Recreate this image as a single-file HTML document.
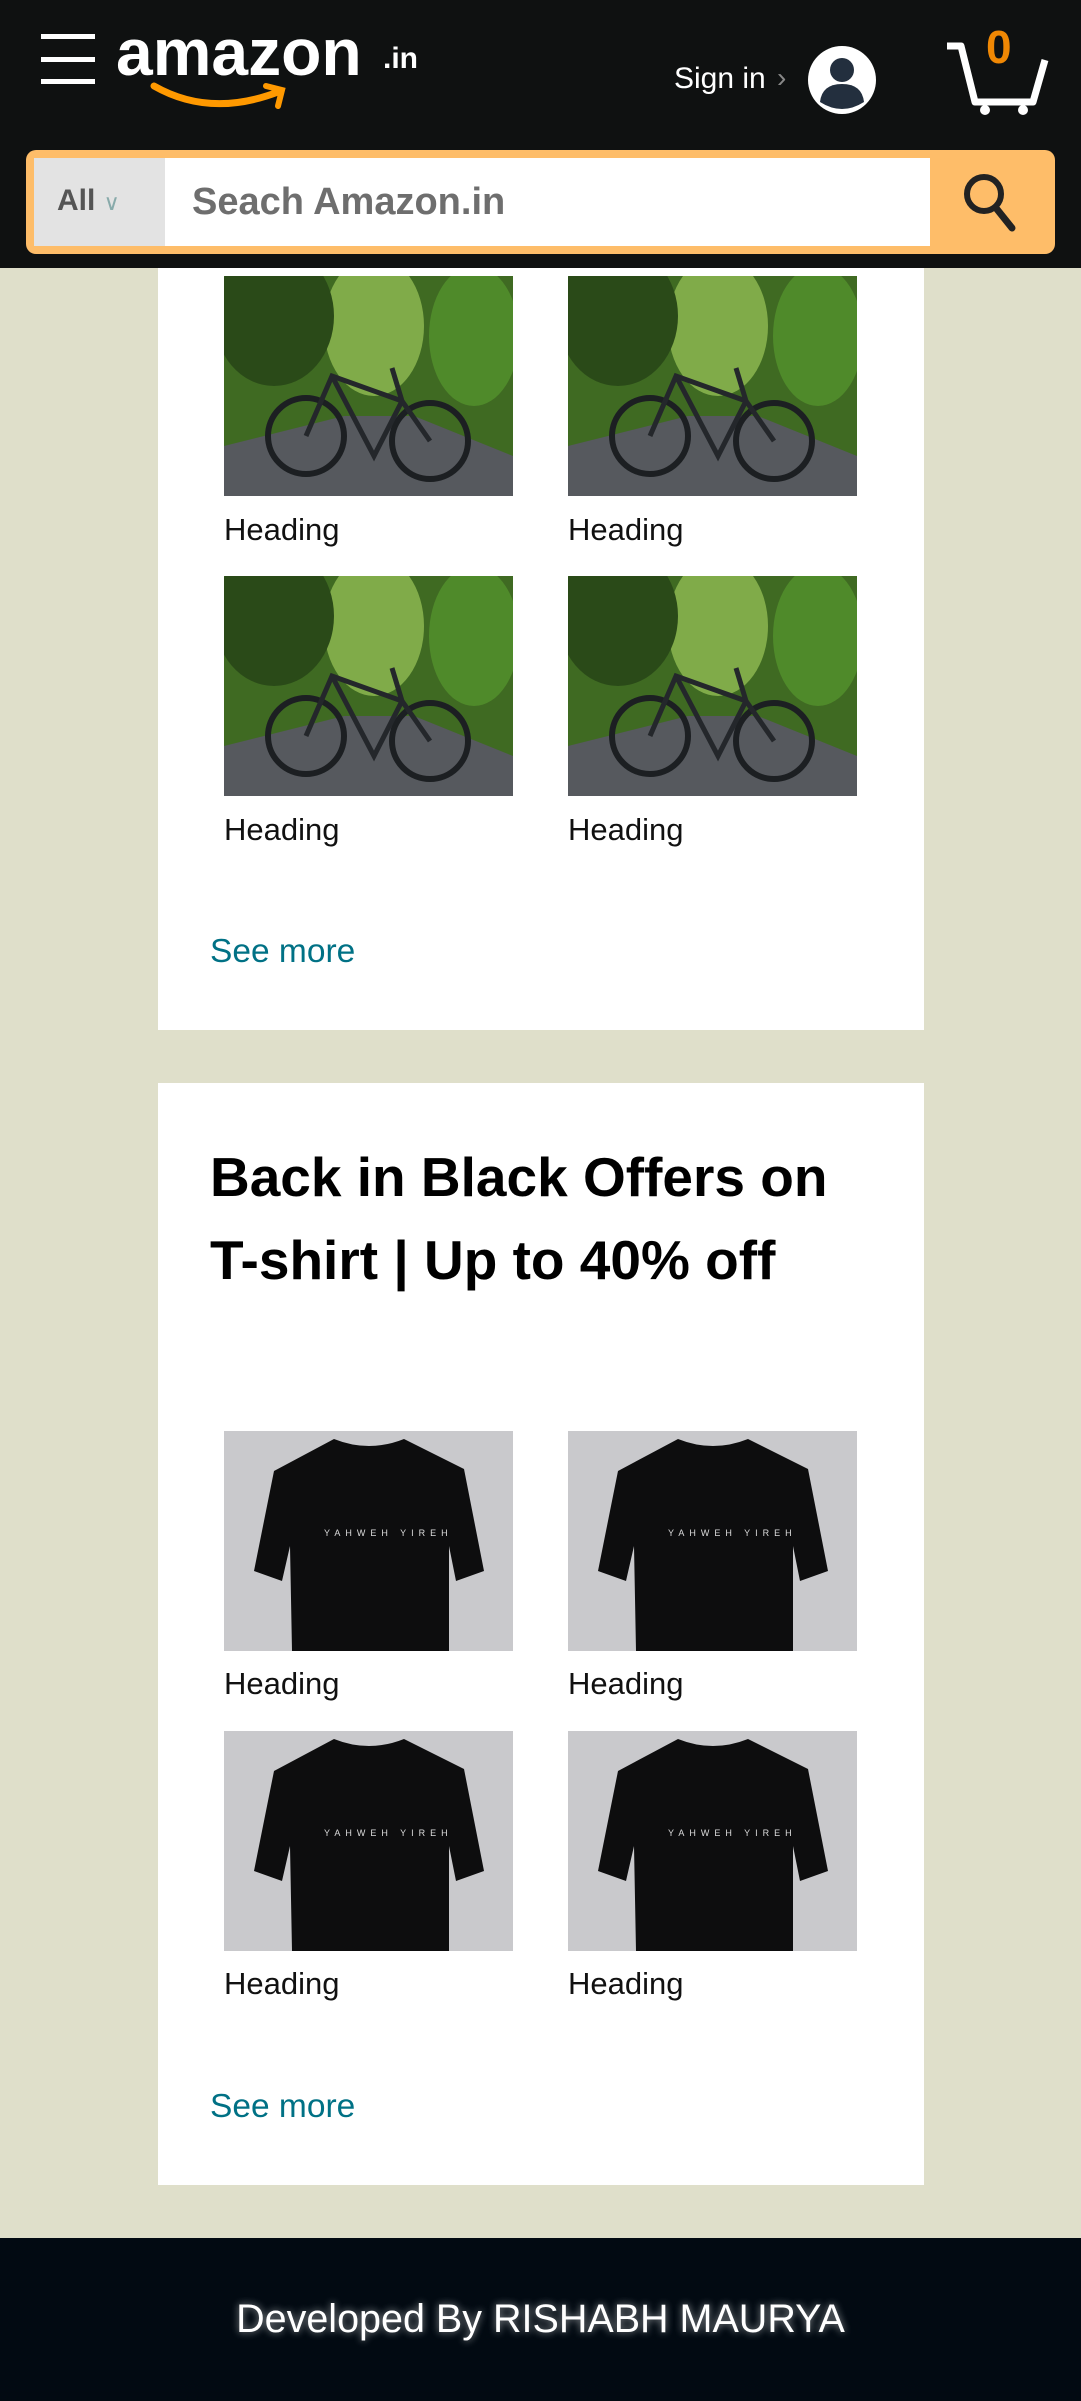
<!DOCTYPE html>
<html><head><meta charset="utf-8"><style>
*{margin:0;padding:0;box-sizing:border-box}
body{width:1081px;height:2401px;background:#dfdfca;position:relative;overflow:hidden;font-family:"Liberation Sans",sans-serif}
.a{position:absolute}
.hd{left:0;top:0;width:1081px;height:268px;background:#0f1111}
.card{background:#fff;left:158px;width:766px}
.img{width:289px;height:220px;overflow:hidden}
.h{font-size:31px;color:#111;line-height:34px}
.more{font-size:33.5px;color:#007185;line-height:34px}
</style></head><body>
<div class="a hd">
  <div class="a" style="left:41px;top:34px;width:54px;height:5px;background:#fff"></div>
  <div class="a" style="left:41px;top:57px;width:54px;height:5px;background:#fff"></div>
  <div class="a" style="left:41px;top:79px;width:54px;height:5px;background:#fff"></div>
  <div class="a" style="left:116px;top:12px;font-size:66px;font-weight:bold;color:#fff;letter-spacing:0px;line-height:80px">amazon</div>
  <svg class="a" style="left:150px;top:78px" width="140" height="40"><path d="M4 8 Q60 40 128 14" stroke="#f90" stroke-width="7" fill="none" stroke-linecap="round"/><path d="M116 8 L132 12 L128 28" stroke="#f90" stroke-width="6" fill="none" stroke-linecap="round"/></svg>
  <div class="a" style="left:383px;top:42px;font-size:30px;font-weight:bold;color:#fff">.in</div>
  <div class="a" style="left:674px;top:62px;font-size:30px;color:#fff">Sign in</div>
  <div class="a" style="left:777px;top:62px;font-size:28px;color:#888">›</div>
  <svg class="a" style="left:808px;top:46px" width="68" height="68"><circle cx="34" cy="34" r="34" fill="#fff"/><circle cx="34" cy="24" r="12" fill="#232f3e"/><path d="M12 56 Q14 38 34 38 Q54 38 56 56 Q34 70 12 56Z" fill="#232f3e"/></svg>
  <svg class="a" style="left:945px;top:40px" width="105" height="75"><path d="M2 6 H16 L30 62 H88 L100 20" stroke="#fff" stroke-width="7" fill="none" stroke-linejoin="round"/><circle cx="40" cy="70" r="5" fill="#fff"/><circle cx="78" cy="70" r="5" fill="#fff"/></svg>
  <div class="a" style="left:986px;top:20px;font-size:46px;font-weight:bold;color:#f08804">0</div>
  <div class="a" style="left:26px;top:150px;width:1029px;height:104px;background:#febd69;border-radius:10px"></div>
  <div class="a" style="left:34px;top:158px;width:131px;height:88px;background:#e3e3e3"></div>
  <div class="a" style="left:57px;top:184px;font-size:30px;font-weight:bold;color:#555">All <span style="color:#8aa;font-weight:normal;font-size:22px">&#8744;</span></div>
  <div class="a" style="left:165px;top:158px;width:765px;height:88px;background:#fff"></div>
  <div class="a" style="left:192px;top:181px;font-size:38px;font-weight:bold;color:#6e6e6e">Seach Amazon.in</div>
  <svg class="a" style="left:960px;top:170px" width="60" height="66"><circle cx="24" cy="24" r="17" stroke="#222" stroke-width="6" fill="none"/><path d="M36 38 L52 58" stroke="#222" stroke-width="7" stroke-linecap="round"/></svg>
</div>

<svg width="0" height="0" style="position:absolute">
<defs>
<symbol id="bike" viewBox="0 0 289 220">
<rect width="289" height="220" fill="#3f6a22"/>
<ellipse cx="150" cy="50" rx="50" ry="70" fill="#9cc85a" opacity=".7"/>
<ellipse cx="50" cy="40" rx="60" ry="70" fill="#2a4a18"/>
<ellipse cx="250" cy="60" rx="45" ry="70" fill="#4f8a2a"/>
<path d="M0 170 L120 140 L190 140 L289 180 L289 220 L0 220Z" fill="#56595e"/>
<circle cx="82" cy="160" r="38" stroke="#1c1f22" stroke-width="6" fill="none"/>
<circle cx="206" cy="165" r="38" stroke="#1c1f22" stroke-width="6" fill="none"/>
<path d="M82 160 L108 100 L178 125 L206 165 M108 100 L150 180 L178 125 M168 92 L178 125" stroke="#24272b" stroke-width="5" fill="none"/>
</symbol>
<symbol id="tee" viewBox="0 0 289 220">
<rect width="289" height="220" fill="#c9c9cc"/>
<path d="M50 40 L110 8 Q145 22 180 8 L240 38 L260 140 L232 150 L225 115 L225 220 L68 220 L66 115 L58 150 L30 140Z" fill="#0d0d0e"/>
<text x="100" y="105" font-size="9" fill="#ddd" letter-spacing="5" font-family="Liberation Sans">YAHWEH YIREH</text>
</symbol>
</defs></svg>

<div class="a card" style="top:268px;height:762px"></div>
<svg class="a img" style="left:224px;top:276px"><use href="#bike"/></svg>
<svg class="a img" style="left:568px;top:276px"><use href="#bike"/></svg>
<div class="a h" style="left:224px;top:513px">Heading</div>
<div class="a h" style="left:568px;top:513px">Heading</div>
<svg class="a img" style="left:224px;top:576px"><use href="#bike"/></svg>
<svg class="a img" style="left:568px;top:576px"><use href="#bike"/></svg>
<div class="a h" style="left:224px;top:813px">Heading</div>
<div class="a h" style="left:568px;top:813px">Heading</div>
<div class="a more" style="left:210px;top:935px">See more</div>

<div class="a card" style="top:1083px;height:1102px"></div>
<div class="a" style="left:210px;top:1136px;font-size:55px;font-weight:bold;line-height:83px;color:#000;width:710px">Back in Black Offers on<br>T-shirt | Up to 40% off</div>
<svg class="a img" style="left:224px;top:1431px"><use href="#tee"/></svg>
<svg class="a img" style="left:568px;top:1431px"><use href="#tee"/></svg>
<div class="a h" style="left:224px;top:1667px">Heading</div>
<div class="a h" style="left:568px;top:1667px">Heading</div>
<svg class="a img" style="left:224px;top:1731px"><use href="#tee"/></svg>
<svg class="a img" style="left:568px;top:1731px"><use href="#tee"/></svg>
<div class="a h" style="left:224px;top:1967px">Heading</div>
<div class="a h" style="left:568px;top:1967px">Heading</div>
<div class="a more" style="left:210px;top:2090px">See more</div>

<div class="a" style="left:0;top:2238px;width:1081px;height:163px;background:#020a12"></div>
<div class="a" style="left:0;top:2297px;width:1081px;text-align:center;font-size:39.5px;color:#fff;text-shadow:0 0 8px rgba(255,255,255,.6)">Developed By RISHABH MAURYA</div>
</body></html>
